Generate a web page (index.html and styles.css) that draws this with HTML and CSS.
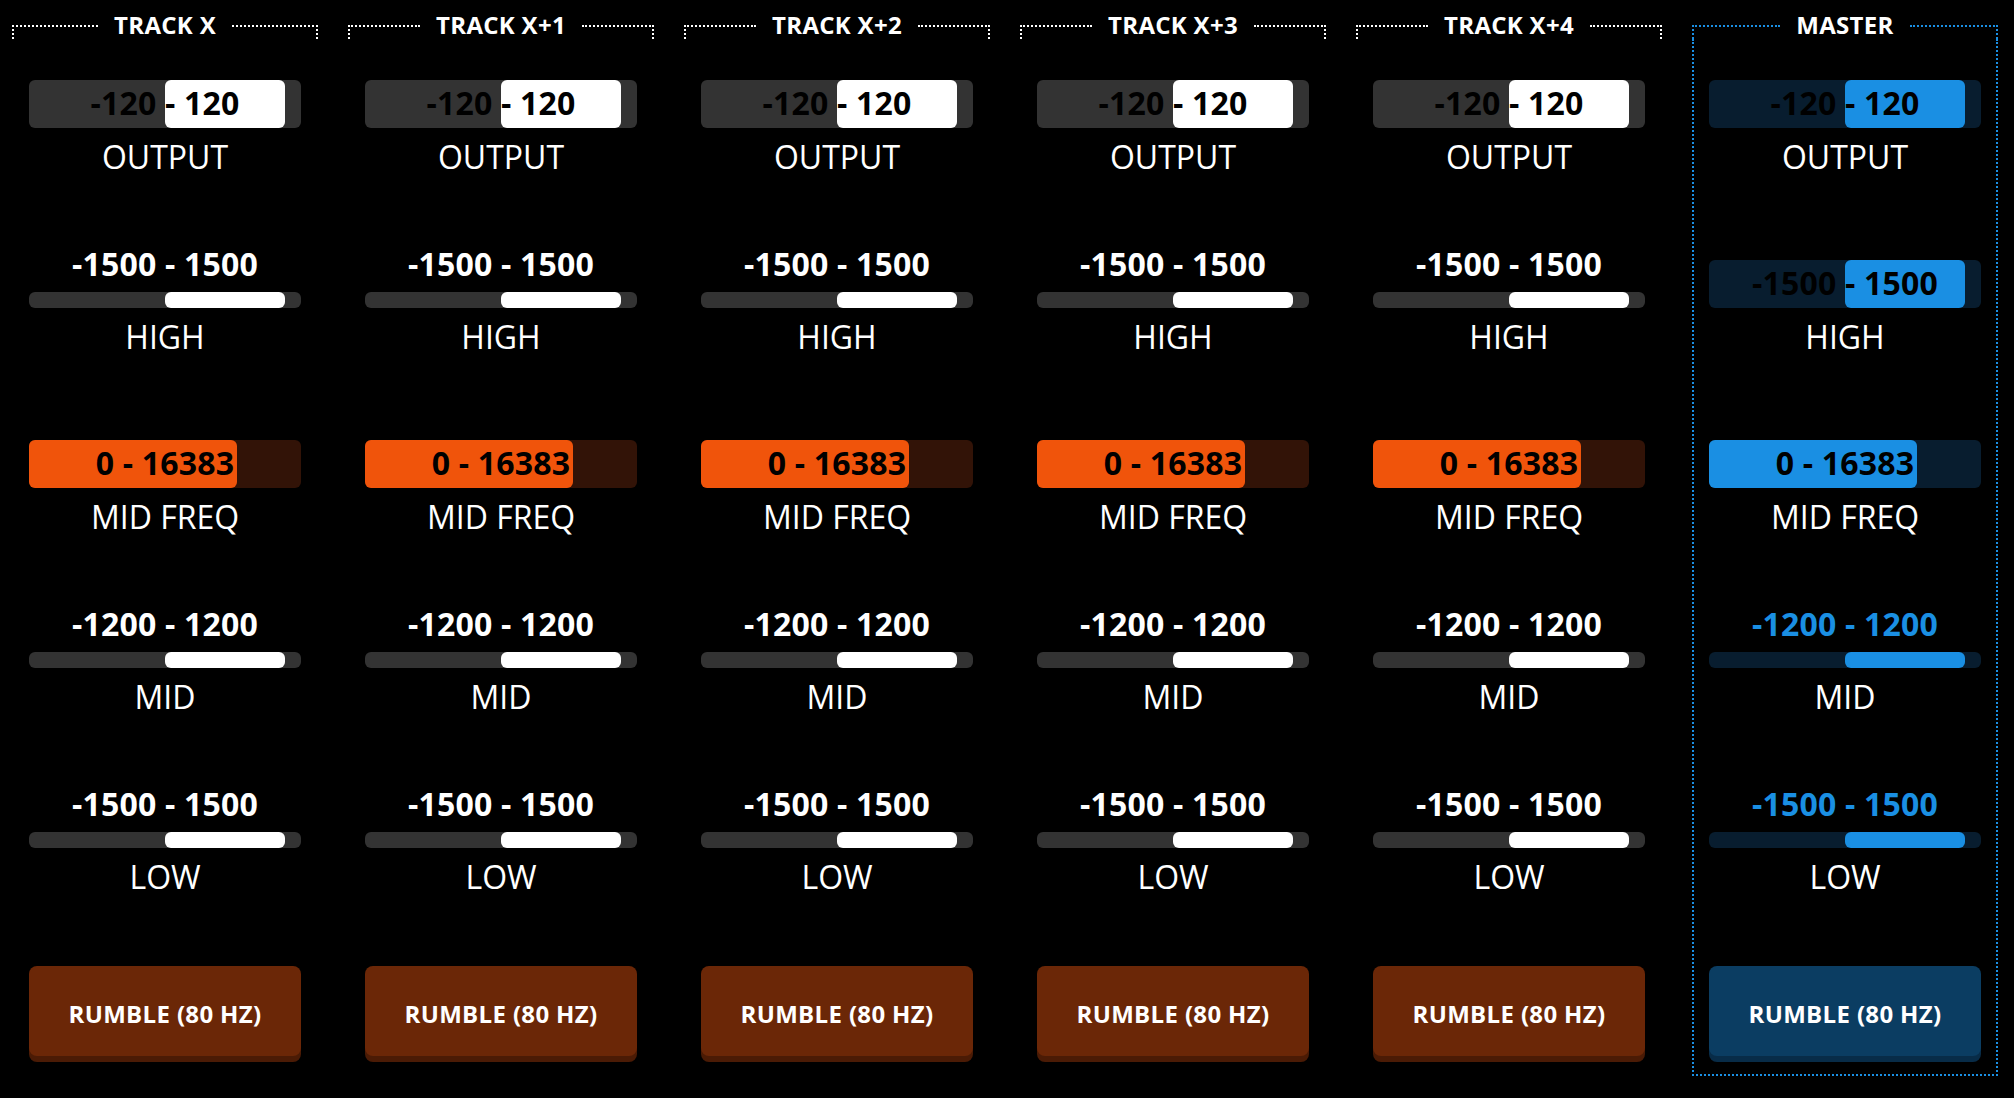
FILE: index.html
```html
<!DOCTYPE html>
<html lang="en">
<head>
<meta charset="utf-8">
<title>EQ Mixer</title>
<link rel="stylesheet" href="styles.css">
</head>
<body>
<main class="mixer">

  <section class="col track">
    <header class="col-head"><span class="rule rule-l"></span><h2 class="title">TRACK X</h2><span class="rule rule-r"></span></header>
    <div class="col-body">
      <div class="ctl"><div class="ctl-area"><div class="bar big"><div class="fill fill-half"></div><span class="bar-text">-120 - 120</span></div></div><div class="label">OUTPUT</div></div>
      <div class="ctl"><div class="ctl-area"><div class="val">-1500 - 1500</div><div class="bar thin"><div class="fill fill-half"></div></div></div><div class="label">HIGH</div></div>
      <div class="ctl"><div class="ctl-area"><div class="bar big freq"><div class="fill fill-freq"></div><span class="bar-text">0 - 16383</span></div></div><div class="label">MID FREQ</div></div>
      <div class="ctl"><div class="ctl-area"><div class="val">-1200 - 1200</div><div class="bar thin"><div class="fill fill-half"></div></div></div><div class="label">MID</div></div>
      <div class="ctl"><div class="ctl-area"><div class="val">-1500 - 1500</div><div class="bar thin"><div class="fill fill-half"></div></div></div><div class="label">LOW</div></div>
      <button class="rumble">RUMBLE (80 HZ)</button>
    </div>
  </section>

  <section class="col track">
    <header class="col-head"><span class="rule rule-l"></span><h2 class="title">TRACK X+1</h2><span class="rule rule-r"></span></header>
    <div class="col-body">
      <div class="ctl"><div class="ctl-area"><div class="bar big"><div class="fill fill-half"></div><span class="bar-text">-120 - 120</span></div></div><div class="label">OUTPUT</div></div>
      <div class="ctl"><div class="ctl-area"><div class="val">-1500 - 1500</div><div class="bar thin"><div class="fill fill-half"></div></div></div><div class="label">HIGH</div></div>
      <div class="ctl"><div class="ctl-area"><div class="bar big freq"><div class="fill fill-freq"></div><span class="bar-text">0 - 16383</span></div></div><div class="label">MID FREQ</div></div>
      <div class="ctl"><div class="ctl-area"><div class="val">-1200 - 1200</div><div class="bar thin"><div class="fill fill-half"></div></div></div><div class="label">MID</div></div>
      <div class="ctl"><div class="ctl-area"><div class="val">-1500 - 1500</div><div class="bar thin"><div class="fill fill-half"></div></div></div><div class="label">LOW</div></div>
      <button class="rumble">RUMBLE (80 HZ)</button>
    </div>
  </section>

  <section class="col track">
    <header class="col-head"><span class="rule rule-l"></span><h2 class="title">TRACK X+2</h2><span class="rule rule-r"></span></header>
    <div class="col-body">
      <div class="ctl"><div class="ctl-area"><div class="bar big"><div class="fill fill-half"></div><span class="bar-text">-120 - 120</span></div></div><div class="label">OUTPUT</div></div>
      <div class="ctl"><div class="ctl-area"><div class="val">-1500 - 1500</div><div class="bar thin"><div class="fill fill-half"></div></div></div><div class="label">HIGH</div></div>
      <div class="ctl"><div class="ctl-area"><div class="bar big freq"><div class="fill fill-freq"></div><span class="bar-text">0 - 16383</span></div></div><div class="label">MID FREQ</div></div>
      <div class="ctl"><div class="ctl-area"><div class="val">-1200 - 1200</div><div class="bar thin"><div class="fill fill-half"></div></div></div><div class="label">MID</div></div>
      <div class="ctl"><div class="ctl-area"><div class="val">-1500 - 1500</div><div class="bar thin"><div class="fill fill-half"></div></div></div><div class="label">LOW</div></div>
      <button class="rumble">RUMBLE (80 HZ)</button>
    </div>
  </section>

  <section class="col track">
    <header class="col-head"><span class="rule rule-l"></span><h2 class="title">TRACK X+3</h2><span class="rule rule-r"></span></header>
    <div class="col-body">
      <div class="ctl"><div class="ctl-area"><div class="bar big"><div class="fill fill-half"></div><span class="bar-text">-120 - 120</span></div></div><div class="label">OUTPUT</div></div>
      <div class="ctl"><div class="ctl-area"><div class="val">-1500 - 1500</div><div class="bar thin"><div class="fill fill-half"></div></div></div><div class="label">HIGH</div></div>
      <div class="ctl"><div class="ctl-area"><div class="bar big freq"><div class="fill fill-freq"></div><span class="bar-text">0 - 16383</span></div></div><div class="label">MID FREQ</div></div>
      <div class="ctl"><div class="ctl-area"><div class="val">-1200 - 1200</div><div class="bar thin"><div class="fill fill-half"></div></div></div><div class="label">MID</div></div>
      <div class="ctl"><div class="ctl-area"><div class="val">-1500 - 1500</div><div class="bar thin"><div class="fill fill-half"></div></div></div><div class="label">LOW</div></div>
      <button class="rumble">RUMBLE (80 HZ)</button>
    </div>
  </section>

  <section class="col track">
    <header class="col-head"><span class="rule rule-l"></span><h2 class="title">TRACK X+4</h2><span class="rule rule-r"></span></header>
    <div class="col-body">
      <div class="ctl"><div class="ctl-area"><div class="bar big"><div class="fill fill-half"></div><span class="bar-text">-120 - 120</span></div></div><div class="label">OUTPUT</div></div>
      <div class="ctl"><div class="ctl-area"><div class="val">-1500 - 1500</div><div class="bar thin"><div class="fill fill-half"></div></div></div><div class="label">HIGH</div></div>
      <div class="ctl"><div class="ctl-area"><div class="bar big freq"><div class="fill fill-freq"></div><span class="bar-text">0 - 16383</span></div></div><div class="label">MID FREQ</div></div>
      <div class="ctl"><div class="ctl-area"><div class="val">-1200 - 1200</div><div class="bar thin"><div class="fill fill-half"></div></div></div><div class="label">MID</div></div>
      <div class="ctl"><div class="ctl-area"><div class="val">-1500 - 1500</div><div class="bar thin"><div class="fill fill-half"></div></div></div><div class="label">LOW</div></div>
      <button class="rumble">RUMBLE (80 HZ)</button>
    </div>
  </section>

  <section class="col master">
    <header class="col-head"><span class="rule rule-l"></span><h2 class="title">MASTER</h2><span class="rule rule-r"></span></header>
    <div class="col-body">
      <div class="ctl"><div class="ctl-area"><div class="bar big"><div class="fill fill-half"></div><span class="bar-text">-120 - 120</span></div></div><div class="label">OUTPUT</div></div>
      <div class="ctl"><div class="ctl-area"><div class="bar big"><div class="fill fill-half"></div><span class="bar-text">-1500 - 1500</span></div></div><div class="label">HIGH</div></div>
      <div class="ctl"><div class="ctl-area"><div class="bar big freq"><div class="fill fill-freq"></div><span class="bar-text">0 - 16383</span></div></div><div class="label">MID FREQ</div></div>
      <div class="ctl"><div class="ctl-area"><div class="val">-1200 - 1200</div><div class="bar thin"><div class="fill fill-half"></div></div></div><div class="label">MID</div></div>
      <div class="ctl"><div class="ctl-area"><div class="val">-1500 - 1500</div><div class="bar thin"><div class="fill fill-half"></div></div></div><div class="label">LOW</div></div>
      <button class="rumble">RUMBLE (80 HZ)</button>
    </div>
  </section>

</main>
</body>
</html>
```

FILE: styles.css
```css
* { box-sizing: border-box; }

html, body {
  margin: 0;
  padding: 0;
  background: #000;
}

body {
  font-family: "Open Sans", "Noto Sans", "Liberation Sans", sans-serif;
  color: #fff;
}

.mixer {
  display: flex;
  align-items: flex-start;
  gap: 30px;
  padding: 11px 16px 0 12px;
}

.col {
  --accent: #ffffff;
  --track: #333333;
  --fill: #ffffff;
  --freq-fill: #f0540b;
  --freq-track: #321307;
  --btn: #6b2707;
  --btn-shadow: #4b1b05;
  --val: #ffffff;
  width: 306px;
  display: flex;
  flex-direction: column;
}

.col.master {
  --accent: #1a8fe3;
  --track: #081d2f;
  --fill: #1a8fe3;
  --freq-fill: #1a8fe3;
  --freq-track: #081d2f;
  --btn: #0b3d62;
  --btn-shadow: #082c48;
  --val: #1a8fe3;
}

/* header with dotted rule */
.col-head {
  display: flex;
  align-items: flex-start;
  height: 28px;
}

.rule {
  flex: 1;
  height: 14px;
  margin-top: 14px;
  border-top: 2px dotted var(--accent);
}

.rule-l { border-left: 2px dotted var(--accent); }
.rule-r { border-right: 2px dotted var(--accent); }

.title {
  margin: 0;
  padding: 0 16px;
  font-size: 24px;
  line-height: 28px;
  font-weight: 700;
  letter-spacing: 0.3px;
  color: #fff;
  white-space: nowrap;
}

.col-body {
  display: flex;
  flex-direction: column;
  align-items: center;
  padding: 24px 0 12px;
  border: 2px dotted transparent;
  border-top: none;
}

.master .col-body {
  border-color: var(--accent);
}

/* control section */
.ctl {
  height: 180px;
  width: 272px;
  display: flex;
  flex-direction: column;
  align-items: center;
}

.ctl-area {
  height: 65px;
  width: 100%;
  display: flex;
  flex-direction: column;
  justify-content: flex-end;
  align-items: center;
}

.val {
  font-size: 32px;
  line-height: 40px;
  font-weight: 700;
  letter-spacing: 0.2px;
  color: var(--val);
  margin-bottom: 8px;
  white-space: nowrap;
}

.label {
  margin-top: 9px;
  font-size: 32px;
  line-height: 40px;
  font-weight: 400;
  color: #fff;
  white-space: nowrap;
}

.bar {
  position: relative;
  width: 272px;
  background: var(--track);
  border-radius: 6px;
}

.bar.thin { height: 16px; }

.bar.big {
  height: 48px;
  display: flex;
  align-items: center;
  justify-content: center;
}

.bar.freq { background: var(--freq-track); }

.fill {
  position: absolute;
  top: 0;
  bottom: 0;
  background: var(--fill);
  border-radius: 6px;
}

.fill-half {
  left: 50%;
  width: 44.1%;
}

.fill-freq {
  left: 0;
  width: 76.5%;
  background: var(--freq-fill);
}

.bar-text {
  position: relative;
  font-size: 32px;
  line-height: 46px;
  padding-bottom: 2px;
  font-weight: 700;
  letter-spacing: 0.2px;
  color: #000;
  white-space: nowrap;
}

.rumble {
  margin-top: 3px;
  width: 272px;
  height: 90px;
  border: none;
  border-radius: 8px;
  background: var(--btn);
  box-shadow: 0 6px 0 var(--btn-shadow);
  color: #fff;
  font-family: inherit;
  font-size: 24px;
  font-weight: 700;
  line-height: 28px;
  letter-spacing: 0.35px;
  padding: 6px 0 0;
  margin-bottom: 6px;
}
```
